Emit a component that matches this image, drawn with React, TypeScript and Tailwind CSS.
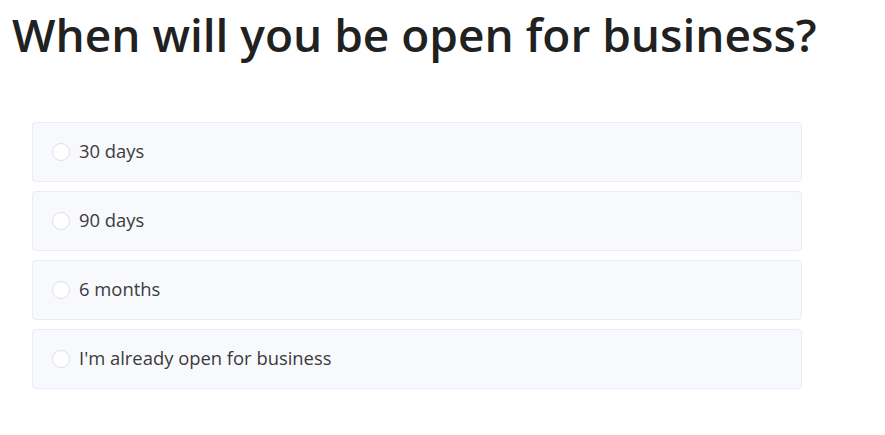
import React from "react";

const options = ["30 days", "90 days", "6 months", "I'm already open for business"];

export default function App() {
  return (
    <div className="w-[885px] h-[435px] bg-white" style={{ fontFamily: '"Open Sans", sans-serif' }}>
      <h1 className="pl-[12px] pt-[3px] text-[46px] leading-[62px] font-semibold text-[#212121]">
        When will you be open for business?
      </h1>
      <div className="mt-[57px] ml-[32px] w-[770px] flex flex-col gap-[9px]">
        {options.map((o) => (
          <label
            key={o}
            className="h-[60px] flex items-center gap-[9px] pl-[19px] rounded-[4px] border border-[#e9ebf5] bg-[#f8f9fd] text-[18.4px] text-[#3b3b3b]"
          >
            <span className="w-[18px] h-[18px] rounded-full border border-[#dde0ec] bg-white" />
            <span className="-mt-[2px]">{o}</span>
          </label>
        ))}
      </div>
    </div>
  );
}
